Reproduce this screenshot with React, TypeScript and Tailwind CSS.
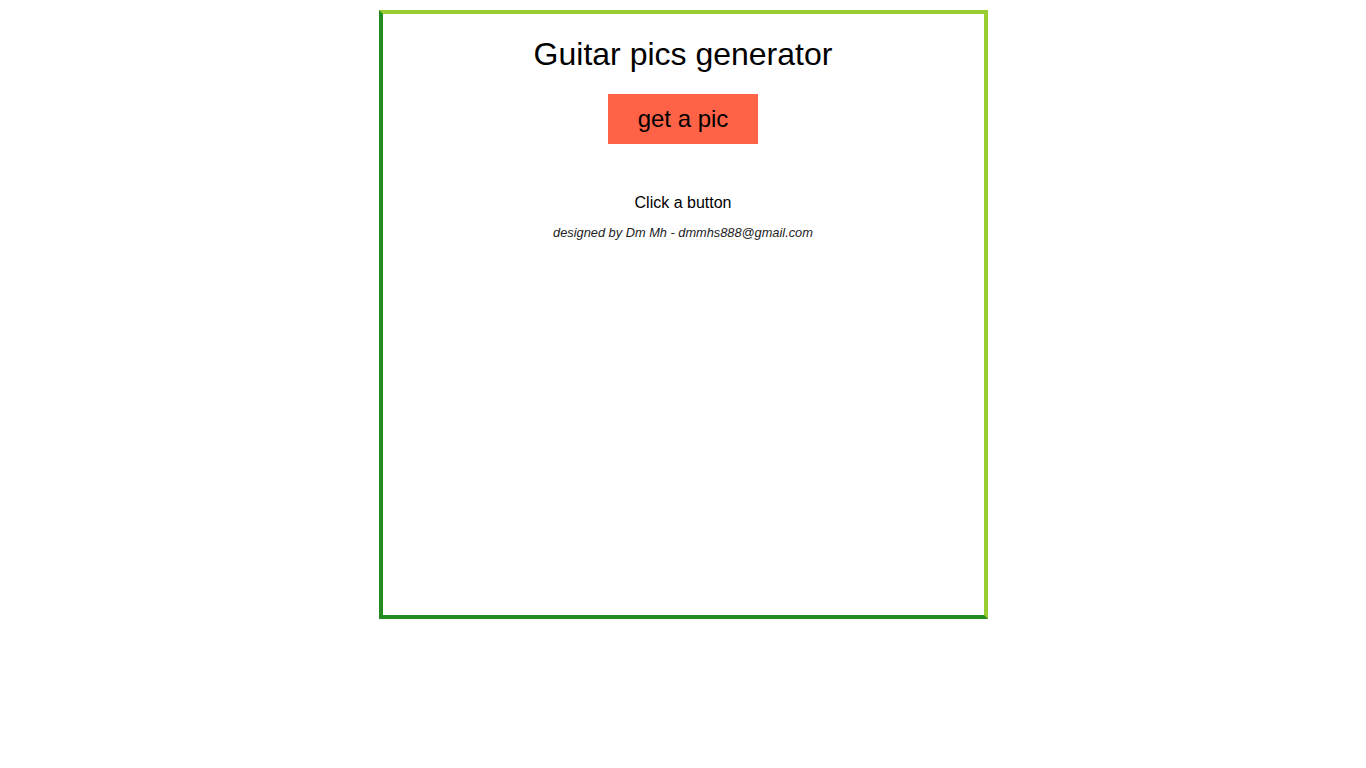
export default function App() {
  return (
    <div className="min-h-screen bg-white pt-[10px]" style={{ fontFamily: '"Liberation Sans", Arial, sans-serif' }}>
      <div className="mx-auto w-[609px] h-[609px] border-4 border-t-[#9acd32] border-r-[#9acd32] border-b-[#228b22] border-l-[#228b22] flex flex-col items-center">
        <h1 className="mt-[22px] text-[32px] leading-[37px] text-black">Guitar pics generator</h1>
        <button className="mt-[21px] w-[150px] h-[50px] bg-[#ff6347] text-[24px] text-black">get a pic</button>
        <p className="mt-[50px] text-[16px] leading-[18px] text-black">Click a button</p>
        <p className="mt-[13px] text-[12.8px] leading-[15px] italic text-[#222]">designed by Dm Mh - dmmhs888@gmail.com</p>
      </div>
    </div>
  );
}
